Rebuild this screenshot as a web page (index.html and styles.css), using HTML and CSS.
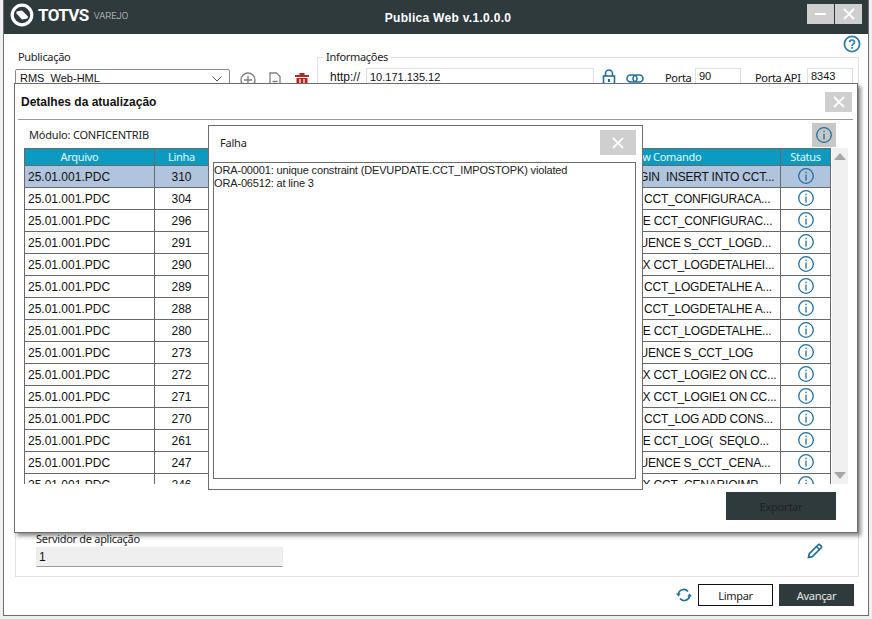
FILE: index.html
```html
<!DOCTYPE html>
<html lang="pt">
<head>
<meta charset="utf-8">
<title>Publica Web</title>
<link rel="stylesheet" href="styles.css">
</head>
<body>
<svg class="defs" width="0" height="0">
  <symbol id="info" viewBox="0 0 18 18">
    <circle cx="9" cy="9" r="7.300" fill="none" stroke="currentColor" stroke-width="1.300"/>
    <rect x="8.350" y="7.600" width="1.300" height="6" fill="currentColor"/>
    <rect x="8.350" y="4.700" width="1.300" height="1.500" fill="currentColor"/>
  </symbol>
  <symbol id="cross" viewBox="0 0 12 12">
    <path d="M1 1 11 11M11 1 1 11" stroke="currentColor" stroke-width="1.800" fill="none"/>
  </symbol>
</svg>

<div class="window">
  <header class="titlebar">
    <div class="brand">
      <svg class="logo" width="24" height="24" viewBox="0 0 24 24">
        <circle cx="12" cy="12" r="9.800" fill="none" stroke="#fff" stroke-width="3.200"/>
        <path d="M6.500 8.500 12 7.500 18 13.500 17.500 15.500 12 16.500 6.500 10.500Z" fill="#fff"/>
      </svg>
      <span class="brand-name">TOTVS</span>
      <span class="brand-sub">VAREJO</span>
    </div>
    <div class="app-title">Publica Web v.1.0.0.0</div>
    <div class="win-buttons">
      <button class="win-btn"><span class="min-bar"></span></button>
      <button class="win-btn"><svg width="12" height="12"><use href="#cross"/></svg></button>
    </div>
  </header>

  <main class="content">
    <div class="help-row">
      <svg class="help" width="18" height="18" viewBox="0 0 18 18">
        <circle cx="9" cy="9" r="7.600" fill="none" stroke="#2c7fae" stroke-width="1.800"/>
        <path d="M6.600 7.200C6.600 5.800 7.700 5 9 5s2.500.8 2.500 2.100c0 1.900-2.400 1.800-2.400 3.900" fill="none" stroke="#2c7fae" stroke-width="1.700"/>
        <rect x="8.200" y="12" width="1.800" height="1.800" fill="#2c7fae"/>
      </svg>
    </div>

    <section class="top">
      <div class="pub">
        <label class="label">Publicação</label>
        <div class="combo">
          <span>RMS_Web-HML</span>
          <svg width="10" height="6" viewBox="0 0 10 6"><path d="M.5.5 5 5 9.500.5" fill="none" stroke="#555" stroke-width="1"/></svg>
        </div>
      </div>
      <div class="pub-actions">
        <svg width="16" height="16" viewBox="0 0 16 16"><circle cx="8" cy="8" r="7" fill="none" stroke="#808080" stroke-width="1.400"/><path d="M8 4v8M4 8h8" stroke="#808080" stroke-width="1.400"/></svg>
        <svg width="12" height="16" viewBox="0 0 12 16"><path d="M1 1h6.500L11 4.500V15H1Z" fill="none" stroke="#808080" stroke-width="1.300"/><path d="M3.500 9.500h5M3.500 12h5" stroke="#808080" stroke-width="1.300"/></svg>
        <svg width="16" height="16" viewBox="0 0 16 16"><path d="M1 3h14v2H1zM5.500 1h5v2h-5zM2.500 6h11v9h-11z" fill="#b5271e"/><path d="M6 7v7M10 7v7" stroke="#fff" stroke-width="1.200"/></svg>
      </div>
      <fieldset class="info">
        <legend>Informações</legend>
        <div class="info-row">
          <span class="http">http://</span>
          <div class="field field-url">10.171.135.12</div>
          <svg class="lock" width="14" height="17" viewBox="0 0 14 17"><path d="M3.500 7V4.500a3.500 3.500 0 0 1 7 0V7" fill="none" stroke="#1f6f9f" stroke-width="1.600"/><rect x="1.500" y="7" width="11" height="9" fill="none" stroke="#1f6f9f" stroke-width="1.600"/><rect x="6" y="10" width="2" height="3" fill="#1f6f9f"/></svg>
          <svg class="link" width="18" height="9" viewBox="0 0 18 9"><rect x="1" y="1" width="10" height="7" rx="3.500" fill="none" stroke="#1f6f9f" stroke-width="1.600"/><rect x="7" y="1" width="10" height="7" rx="3.500" fill="none" stroke="#1f6f9f" stroke-width="1.600"/></svg>
          <span class="port-label">Porta</span>
          <div class="field field-port">90</div>
          <span class="api-label">Porta API</span>
          <div class="field field-port">8343</div>
        </div>
      </fieldset>
    </section>

    <section class="lower">
      <label class="label">Servidor de aplicação</label>
      <div class="server-row">
        <div class="server-input">1</div>
        <svg class="pencil" width="16" height="16" viewBox="0 0 16 16"><path d="M1.500 14.500l.8-3.800L11 2a1.500 1.500 0 0 1 2.100 0l.9.9a1.500 1.500 0 0 1 0 2.100l-8.700 8.700Z" fill="none" stroke="#1f6f9f" stroke-width="1.700"/><path d="M9.500 3.500l3 3" stroke="#1f6f9f" stroke-width="1.500"/></svg>
      </div>
    </section>

    <footer class="actions">
      <svg class="refresh" width="16" height="14" viewBox="0 0 16 14"><path d="M2.300 6.500A5.500 5.500 0 0 1 12 3.500M13.700 7.500A5.500 5.500 0 0 1 4 10.500" fill="none" stroke="#1f6f9f" stroke-width="1.700"/><path d="M0 5.500h4.800L2.400 8.500ZM16 8.500h-4.800l2.400-3Z" fill="#1f6f9f"/></svg>
      <button class="btn btn-light">Limpar</button>
      <button class="btn btn-dark">Avançar</button>
    </footer>
  </main>
</div>

<section class="dialog details">
  <div class="details-title">
    <h1>Detalhes da atualização</h1>
    <button class="x-btn x-small"><svg width="12" height="12"><use href="#cross"/></svg></button>
  </div>
  <div class="rule"></div>
  <div class="module-row">
    <span class="module">Módulo: CONFICENTRIB</span>
    <button class="info-btn"><svg width="18" height="18"><use href="#info"/></svg></button>
  </div>
  <div class="table-area">
    <div class="table-clip">
      <table class="grid">
        <colgroup>
          <col class="c-file"><col class="c-line"><col class="c-mid"><col class="c-cmd"><col class="c-status">
        </colgroup>
        <thead>
          <tr><th class="th-file">Arquivo</th><th>Linha</th><th>Objeto</th><th class="th-cmd">View Comando</th><th>Status</th></tr>
        </thead>
        <tbody>
          <tr class="selected"><td>25.01.001.PDC</td><td class="num">310</td><td></td><td class="cmd">DECLARE BEGIN  INSERT INTO CCT...</td><td class="stat"><svg width="18" height="18"><use href="#info"/></svg></td></tr>
          <tr><td>25.01.001.PDC</td><td class="num">304</td><td></td><td class="cmd">ALTER TABLE CCT_CONFIGURACA...</td><td class="stat"><svg width="18" height="18"><use href="#info"/></svg></td></tr>
          <tr><td>25.01.001.PDC</td><td class="num">296</td><td></td><td class="cmd">CREATE TABLE CCT_CONFIGURAC...</td><td class="stat"><svg width="18" height="18"><use href="#info"/></svg></td></tr>
          <tr><td>25.01.001.PDC</td><td class="num">291</td><td></td><td class="cmd">CREATE SEQUENCE S_CCT_LOGD...</td><td class="stat"><svg width="18" height="18"><use href="#info"/></svg></td></tr>
          <tr><td>25.01.001.PDC</td><td class="num">290</td><td></td><td class="cmd">CREATE INDEX CCT_LOGDETALHEI...</td><td class="stat"><svg width="18" height="18"><use href="#info"/></svg></td></tr>
          <tr><td>25.01.001.PDC</td><td class="num">289</td><td></td><td class="cmd">ALTER TABLE CCT_LOGDETALHE A...</td><td class="stat"><svg width="18" height="18"><use href="#info"/></svg></td></tr>
          <tr><td>25.01.001.PDC</td><td class="num">288</td><td></td><td class="cmd">ALTER TABLE CCT_LOGDETALHE A...</td><td class="stat"><svg width="18" height="18"><use href="#info"/></svg></td></tr>
          <tr><td>25.01.001.PDC</td><td class="num">280</td><td></td><td class="cmd">CREATE TABLE CCT_LOGDETALHE...</td><td class="stat"><svg width="18" height="18"><use href="#info"/></svg></td></tr>
          <tr><td>25.01.001.PDC</td><td class="num">273</td><td></td><td class="cmd">CREATE SEQUENCE S_CCT_LOG</td><td class="stat"><svg width="18" height="18"><use href="#info"/></svg></td></tr>
          <tr><td>25.01.001.PDC</td><td class="num">272</td><td></td><td class="cmd">CREATE INDEX CCT_LOGIE2 ON CC...</td><td class="stat"><svg width="18" height="18"><use href="#info"/></svg></td></tr>
          <tr><td>25.01.001.PDC</td><td class="num">271</td><td></td><td class="cmd">CREATE INDEX CCT_LOGIE1 ON CC...</td><td class="stat"><svg width="18" height="18"><use href="#info"/></svg></td></tr>
          <tr><td>25.01.001.PDC</td><td class="num">270</td><td></td><td class="cmd">ALTER TABLE CCT_LOG ADD CONS...</td><td class="stat"><svg width="18" height="18"><use href="#info"/></svg></td></tr>
          <tr><td>25.01.001.PDC</td><td class="num">261</td><td></td><td class="cmd">CREATE TABLE CCT_LOG(  SEQLO...</td><td class="stat"><svg width="18" height="18"><use href="#info"/></svg></td></tr>
          <tr><td>25.01.001.PDC</td><td class="num">247</td><td></td><td class="cmd">CREATE SEQUENCE S_CCT_CENA...</td><td class="stat"><svg width="18" height="18"><use href="#info"/></svg></td></tr>
          <tr><td>25.01.001.PDC</td><td class="num">246</td><td></td><td class="cmd">CREATE INDEX CCT_CENARIOIMP...</td><td class="stat"><svg width="18" height="18"><use href="#info"/></svg></td></tr>
        </tbody>
      </table>
    </div>
    <div class="scrollbar">
      <svg width="12" height="7" viewBox="0 0 12 7"><path d="M6 0 12 7H0Z" fill="#a6a6a6"/></svg>
      <svg width="12" height="7" viewBox="0 0 12 7"><path d="M6 7 12 0H0Z" fill="#a6a6a6"/></svg>
    </div>
  </div>
  <div class="export-row"><button class="btn-export">Exportar</button></div>
</section>

<section class="dialog failure">
  <div class="failure-title">
    <h2>Falha</h2>
    <button class="x-btn x-large"><svg width="12" height="12"><use href="#cross"/></svg></button>
  </div>
  <div class="message">ORA-00001: unique constraint (DEVUPDATE.CCT_IMPOSTOPK) violated
ORA-06512: at line 3</div>
</section>
</body>
</html>
```
FILE: styles.css
```css
* { box-sizing: border-box; }
html, body { margin: 0; padding: 0; }
body {
  width: 872px;
  height: 619px;
  overflow: hidden;
  position: relative;
  background: #f0f0f0;
  font-family: "Liberation Sans", Arial, sans-serif;
  font-size: 12px;
  color: #111;
}
.defs { position: absolute; }
button { font: inherit; border: 0; padding: 0; cursor: default; }

.window {
  margin-left: 3px;
  width: 866px;
  height: 616px;
  background: #fff;
  border: 1px solid #6d6d6d;
  border-top: 0;
  display: flex;
  flex-direction: column;
}
.titlebar {
  height: 34px;
  flex: none;
  background: #2f3a3c;
  color: #fff;
  display: grid;
  grid-template-columns: 1fr auto 1fr;
  align-items: center;
}
.brand { display: flex; align-items: center; padding-left: 6px; }
.logo { flex: none; margin-top: -5px; }
.brand-name {
  font-family: Roboto, sans-serif;
  font-weight: 700;
  font-size: 17px;
  line-height: 20px;
  margin: -4px 0 0 4px;
  letter-spacing: -.6px;
}
.brand-sub {
  font-family: Roboto, sans-serif;
  font-weight: 300;
  font-size: 9.500px;
  margin: -3px 0 0 5px;
  color: #cfd3d4;
}
.app-title {
  font-weight: 700;
  font-size: 12px;
  letter-spacing: .3px;
  margin: 2px 0 0 24px;
}
.win-buttons { justify-self: end; align-self: start; display: flex; gap: 1px; margin: 4px 6px 0 0; }
.win-btn {
  width: 27px;
  height: 20px;
  background: #cfcfcf;
  color: #fff;
  display: flex;
  align-items: center;
  justify-content: center;
}
.min-bar { width: 11px; height: 2px; background: #fff; }

.content {
  flex: 1;
  min-height: 0;
  display: flex;
  flex-direction: column;
  padding: 0 9px 0 11px;
}
.help-row { height: 16px; display: flex; justify-content: flex-end; margin-right: -2px; }
.help { margin-top: 1px; }
.top { height: 240px; flex: none; display: flex; }
.label {
  display: block;
  font-family: "Noto Sans", sans-serif;
  font-size: 11px;
  letter-spacing: -.3px;
  line-height: 14px;
  color: #222;
}
.pub { width: 215px; flex: none; }
.pub .label { margin-left: 3px; }
.combo {
  margin-top: 5px;
  height: 22px;
  border: 1px solid #8a8a8a;
  border-radius: 2px;
  padding: 1px 7px 0 4px;
  display: flex;
  justify-content: space-between;
  align-items: flex-start;
  font-size: 11px;
  line-height: 15px;
}
.combo svg { margin-top: 5px; }
.pub-actions { display: flex; align-items: flex-start; gap: 13px; padding: 22px 0 0 10px; width: 87px; flex: none; }

.info {
  flex: 1;
  margin: 0;
  padding: 4px 4px 0 12px;
  border: 1px solid #e2e2e2;
  min-width: 0;
}
.info legend {
  padding: 0 3px;
  margin-left: -7px;
  font-family: "Noto Sans", sans-serif;
  font-size: 11px;
  letter-spacing: -.3px;
  line-height: 14px;
  color: #222;
}
.info-row { display: flex; align-items: flex-start; line-height: 15px; }
.http { width: 36px; flex: none; padding-top: 2px; }
.field {
  height: 20px;
  border: 1px solid #e0e0e0;
  padding: 0 3px;
  font-size: 11px;
  line-height: 15px;
}
.field-url { width: 228px; flex: none; padding-top: 1px; }
.lock { margin: 1px 0 0 8px; flex: none; }
.link { margin: 6px 0 0 10px; flex: none; }
.port-label, .api-label {
  margin-top: 2px;
  font-family: "Noto Sans", sans-serif;
  font-size: 11px;
  letter-spacing: -.3px;
  flex: none;
}
.port-label { margin-left: 21px; width: 30px; }
.api-label { margin-left: 14px; width: 52px; }
.field-port { width: 46px; flex: none; }

.lower {
  flex: 1;
  min-height: 0;
  border: 1px solid #e2e2e2;
  padding: 0 35px 9px 20px;
  display: flex;
  flex-direction: column;
  justify-content: flex-end;
}
.server-row { display: flex; align-items: flex-start; justify-content: space-between; margin-top: 1px; }
.server-input {
  width: 247px;
  height: 20px;
  background: #efefef;
  border: 1px solid #ececec;
  border-bottom-color: #9a9a9a;
  padding: 2px 2px;
  line-height: 15px;
}
.pencil { margin-top: -4px; }
.actions {
  flex: none;
  display: flex;
  align-items: center;
  justify-content: flex-end;
  gap: 6px;
  padding: 7px 5px 9px 0;
}
.btn {
  width: 75px;
  height: 22px;
  font-family: "Noto Sans", sans-serif;
  font-size: 11px;
  letter-spacing: -.3px;
}
.btn-light { background: #fff; border: 1px solid #111; color: #222; }
.btn-dark { background: #2f3a3c; color: #e8e8e8; }

.dialog {
  position: absolute;
  background: #fff;
  border: 1px solid #6d6d6d;
}
.details {
  left: 14px;
  top: 83px;
  width: 844px;
  height: 450px;
  box-shadow: 3px 3px 4px rgba(0, 0, 0, .45);
  display: flex;
  flex-direction: column;
  padding: 0 5px 0 9px;
}
.details-title {
  height: 35px;
  flex: none;
  display: flex;
  align-items: center;
  justify-content: space-between;
}
.details-title h1 {
  margin: 0 0 0 -3px;
  font-size: 12px;
  font-weight: 700;
  color: #111;
}
.x-btn { background: #cfcfcf; color: #fff; display: flex; align-items: center; justify-content: center; }
.x-small { width: 27px; height: 20px; }
.x-large { width: 36px; height: 25px; }
.rule { height: 1px; background: #9a9a9a; flex: none; margin: 0 -1px 0 -6px; }
.module-row {
  height: 28px;
  flex: none;
  display: flex;
  justify-content: space-between;
  align-items: flex-start;
  padding: 3px 16px 0 5px;
}
.module { font-family: "Noto Sans", sans-serif; font-size: 11px; letter-spacing: -.2px; line-height: 24px; color: #222; }
.info-btn { width: 24px; height: 24px; background: #c8c8c8; color: #1f6f9f; display: flex; align-items: center; justify-content: center; }
.table-area { height: 336px; flex: none; display: flex; gap: 1px; }
.table-clip { width: 807px; flex: none; height: 336px; overflow: hidden; }
.grid { border-collapse: collapse; table-layout: fixed; width: 806px; }
.c-file { width: 130px; }
.c-line { width: 54px; }
.c-mid { width: 354px; }
.c-cmd { width: 218px; }
.c-status { width: 50px; }
.grid th {
  height: 17px;
  padding: 0 0 2px;
  background: #0b9bc0;
  color: #eaf6fa;
  font-family: "Noto Sans", sans-serif;
  font-size: 11px;
  font-weight: 400;
  letter-spacing: -.3px;
  line-height: 13px;
  border: 1px solid #696969;
}
.grid .th-file { padding-right: 20px; }
.grid .th-cmd { padding-right: 14px; }
.grid td {
  height: 22px;
  padding: 0 0 0 3px;
  border: 1px solid #696969;
  white-space: pre;
  overflow: hidden;
  color: #111;
}
.grid .selected td { background: #b0c4de; }
.grid .num { text-align: center; padding: 0; }
.grid .cmd { padding-left: 2px; letter-spacing: -.2px; }
.grid .stat { padding: 0; color: #1f6f9f; line-height: 0; }
.grid .stat svg { display: block; margin: -1px auto 0; }
.scrollbar {
  width: 16px;
  flex: none;
  background: #f0f0f0;
  display: flex;
  flex-direction: column;
  justify-content: space-between;
  align-items: center;
  padding: 5px 0;
}
.export-row { flex: 1; display: flex; justify-content: flex-end; align-items: flex-start; padding: 8px 16px 0 0; }
.btn-export {
  width: 110px;
  height: 28px;
  background: #2f3a3c;
  color: #1d2426;
  font-family: "Noto Sans", sans-serif;
  font-size: 11px;
  letter-spacing: -.2px;
}

.failure {
  left: 208px;
  top: 125px;
  width: 435px;
  height: 365px;
  display: flex;
  flex-direction: column;
  padding: 4px 6px 10px 4px;
}
.failure-title {
  height: 32px;
  flex: none;
  display: flex;
  justify-content: space-between;
  align-items: flex-start;
}
.failure-title h2 {
  margin: 0 0 0 7px;
  font-family: "Noto Sans", sans-serif;
  font-size: 11px;
  font-weight: 400;
  letter-spacing: -.2px;
  line-height: 26px;
  color: #222;
}
.message {
  flex: 1;
  border: 1px solid #6d6d6d;
  padding: 1px 0 0;
  white-space: pre-wrap;
  font-size: 11px;
  letter-spacing: -.15px;
  line-height: 13px;
  color: #222;
}
```
